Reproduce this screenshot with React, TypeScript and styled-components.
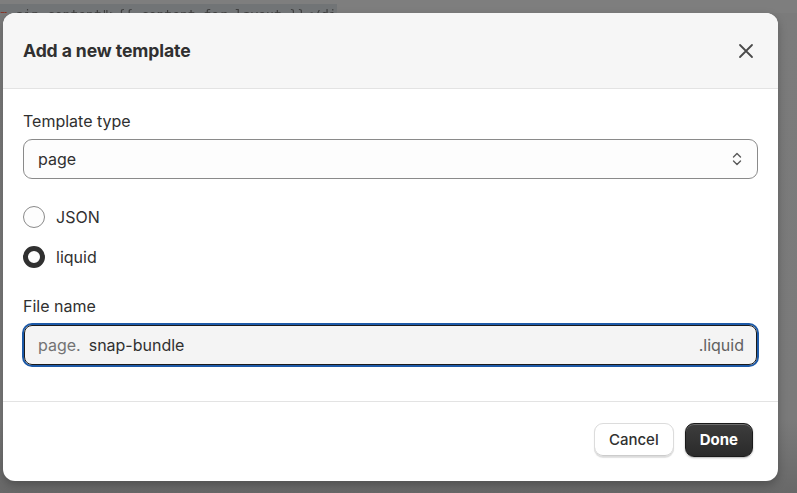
import styled, { createGlobalStyle } from "styled-components";

const GlobalStyle = createGlobalStyle`
  html, body {
    margin: 0;
    padding: 0;
    height: 100%;
  }
  body {
    font-family: Inter, "Noto Sans", "Liberation Sans", sans-serif;
    color: #303030;
    overflow: hidden;
  }
`;

const Backdrop = styled.div`
  width: 797px;
  height: 493px;
  background: linear-gradient(180deg, #7b7b7b 0%, #7a7a7a 85%, #686868 100%);
  display: flex;
  flex-direction: column;
`;

// editor line peeking out above the dialog, dimmed by the overlay
const CodeStrip = styled.div`
  height: 13px;
  display: flex;
  .editor {
    width: 337px;
    background: #717476;
    border-top: 4px solid #7e7e7e;
    font-family: "DejaVu Sans Mono", monospace;
    font-size: 13px;
    line-height: 16px;
    padding-top: 3px;
    color: #3e3e3e;
    white-space: nowrap;
    overflow: hidden;
    filter: blur(0.4px);
    .attr {
      color: #8a2a1a;
    }
  }
  .rest {
    flex: 1;
    background: #7e7e7e;
  }
`;

const Stage = styled.div`
  flex: 1;
  padding: 0 19px 12px 3px;
  display: flex;
  align-items: flex-start;
`;

const Dialog = styled.div`
  width: 775px;
  height: 468px;
  background: #ffffff;
  border-radius: 12px;
  overflow: hidden;
  display: flex;
  flex-direction: column;
  box-shadow: 0 4px 10px rgba(0, 0, 0, 0.25);
`;

const Header = styled.div`
  height: 76px;
  box-sizing: border-box;
  background: #f6f6f6;
  border-bottom: 1px solid #e3e3e3;
  display: flex;
  align-items: center;
  justify-content: space-between;
  padding: 0 22px 0 20px;

  h2 {
    margin: 0;
    font-size: 17.6px;
    font-weight: 650;
    color: #303030;
    letter-spacing: -0.1px;
  }
`;

const CloseButton = styled.button`
  border: none;
  background: none;
  padding: 0;
  width: 20px;
  height: 20px;
  display: flex;
  align-items: center;
  justify-content: center;
  color: #4a4a4a;
  cursor: pointer;
`;

const Body = styled.div`
  height: 313px;
  box-sizing: border-box;
  padding: 22px 20px 0 20px;
  display: flex;
  flex-direction: column;
  border-bottom: 1px solid #e3e3e3;
`;

const Label = styled.div`
  font-size: 16px;
  line-height: 20px;
  color: #303030;
  margin-bottom: 8px;
`;

const Select = styled.div`
  height: 40px;
  box-sizing: border-box;
  border: 1px solid #8a8a8a;
  border-radius: 9px;
  background: #fdfdfd;
  display: flex;
  align-items: center;
  justify-content: space-between;
  padding: 0 14px 0 14px;
  font-size: 16px;
  color: #303030;
`;

const RadioGroup = styled.div`
  display: flex;
  flex-direction: column;
  gap: 18px;
  margin-top: 27px;
  margin-bottom: 28px;
`;

const RadioRow = styled.label`
  display: flex;
  align-items: center;
  gap: 11px;
  font-size: 16px;
  height: 22px;
  color: #303030;
`;

const RadioDot = styled.span<{ $checked?: boolean }>`
  width: 22px;
  height: 22px;
  box-sizing: border-box;
  border-radius: 50%;
  background: #fdfdfd;
  border: ${(p) => (p.$checked ? "5px solid #303030" : "1px solid #8a8a8a")};
`;

const FieldShell = styled.div`
  height: 44px;
  box-sizing: border-box;
  margin: -1px -1px 0;
  border-radius: 10px;
  border: 2px solid #1d5aa8;
  display: flex;
`;

const FieldInner = styled.div`
  flex: 1;
  border-radius: 8px;
  border: 1px solid #1a1a1a;
  background: #f4f4f4;
  display: flex;
  align-items: center;
  padding: 0 12px 0 13px;
  font-size: 16px;

  .prefix {
    color: #737373;
    margin-right: 8px;
  }
  .value {
    color: #303030;
    flex: 1;
  }
  .suffix {
    color: #616161;
  }
`;

const Footer = styled.div`
  flex: 1;
  display: flex;
  align-items: center;
  justify-content: flex-end;
  gap: 11px;
  padding: 0 25px 4px 0;
`;

const Button = styled.button<{ $primary?: boolean }>`
  height: 34px;
  box-sizing: border-box;
  border-radius: 9px;
  font-family: inherit;
  font-size: 15px;
  cursor: pointer;
  ${(p) =>
    p.$primary
      ? `
    padding: 0 14px;
    background: linear-gradient(180deg, #3d3d3d 0%, #2a2a2a 100%);
    color: #ffffff;
    font-weight: 650;
    border: 1px solid #1a1a1a;
    box-shadow: inset 0 1px 0 rgba(255,255,255,0.25), 0 1px 2px rgba(0,0,0,0.3);
  `
      : `
    padding: 0 14px;
    background: #ffffff;
    color: #303030;
    font-weight: 500;
    border: 1px solid #dcdcdc;
    box-shadow: 0 1px 1px rgba(0,0,0,0.12), inset 0 -1px 0 #cccccc;
  `}
`;

const App = () => {
  return (
    <>
      <GlobalStyle />
      <Backdrop>
        <CodeStrip>
          <div className="editor">
            <span className="attr">m</span>{"  ain-content\">{{ content_for_layout }}</div>"}
          </div>
          <div className="rest" />
        </CodeStrip>
        <Stage>
          <Dialog>
            <Header>
              <h2>Add a new template</h2>
              <CloseButton aria-label="Close">
                <svg width="16" height="16" viewBox="0 0 16 16" fill="none">
                  <path d="M2 2 L14 14 M14 2 L2 14" stroke="currentColor" strokeWidth="1.8" strokeLinecap="round" />
                </svg>
              </CloseButton>
            </Header>
            <Body>
              <Label>Template type</Label>
              <Select>
                <span>page</span>
                <svg width="12" height="18" viewBox="0 0 12 18" fill="none">
                  <path d="M2.5 7 L6 3.5 L9.5 7 M2.5 11 L6 14.5 L9.5 11" stroke="#5a5a5a" strokeWidth="1.4" strokeLinecap="round" strokeLinejoin="round" />
                </svg>
              </Select>
              <RadioGroup>
                <RadioRow>
                  <RadioDot />
                  JSON
                </RadioRow>
                <RadioRow>
                  <RadioDot $checked />
                  liquid
                </RadioRow>
              </RadioGroup>
              <Label>File name</Label>
              <FieldShell>
                <FieldInner>
                  <span className="prefix">page.</span>
                  <span className="value">snap-bundle</span>
                  <span className="suffix">.liquid</span>
                </FieldInner>
              </FieldShell>
            </Body>
            <Footer>
              <Button>Cancel</Button>
              <Button $primary>Done</Button>
            </Footer>
          </Dialog>
        </Stage>
      </Backdrop>
    </>
  );
};

export default App;
